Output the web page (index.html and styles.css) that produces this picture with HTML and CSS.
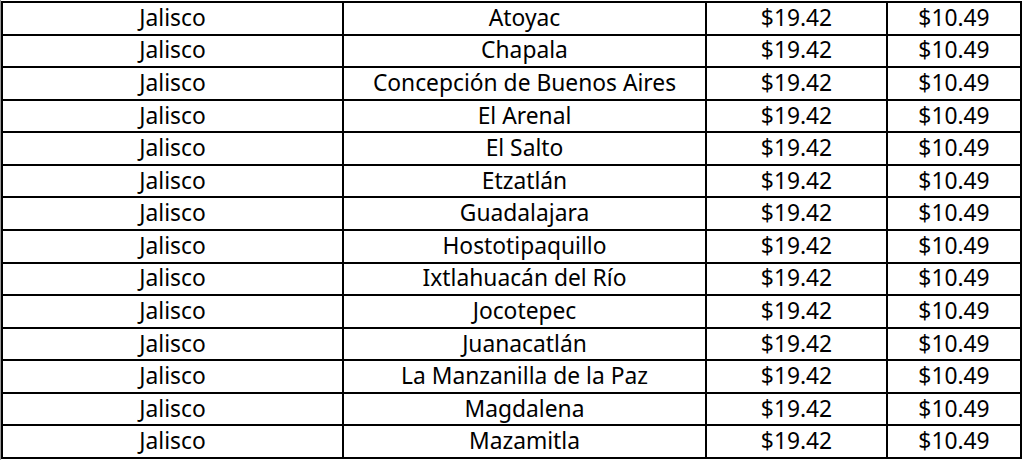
FILE: index.html
```html
<!DOCTYPE html>
<html lang="es">
<head>
<meta charset="utf-8">
<title>Tarifas Jalisco</title>
<link rel="stylesheet" href="styles.css">
</head>
<body>
<div class="page">
  <div class="grid" role="table">
    <div class="row" role="row"><div class="cell">Jalisco</div><div class="cell">Atoyac</div><div class="cell">$19.42</div><div class="cell">$10.49</div></div>
    <div class="row" role="row"><div class="cell">Jalisco</div><div class="cell">Chapala</div><div class="cell">$19.42</div><div class="cell">$10.49</div></div>
    <div class="row" role="row"><div class="cell">Jalisco</div><div class="cell">Concepción de Buenos Aires</div><div class="cell">$19.42</div><div class="cell">$10.49</div></div>
    <div class="row" role="row"><div class="cell">Jalisco</div><div class="cell">El Arenal</div><div class="cell">$19.42</div><div class="cell">$10.49</div></div>
    <div class="row" role="row"><div class="cell">Jalisco</div><div class="cell">El Salto</div><div class="cell">$19.42</div><div class="cell">$10.49</div></div>
    <div class="row" role="row"><div class="cell">Jalisco</div><div class="cell">Etzatlán</div><div class="cell">$19.42</div><div class="cell">$10.49</div></div>
    <div class="row" role="row"><div class="cell">Jalisco</div><div class="cell">Guadalajara</div><div class="cell">$19.42</div><div class="cell">$10.49</div></div>
    <div class="row" role="row"><div class="cell">Jalisco</div><div class="cell">Hostotipaquillo</div><div class="cell">$19.42</div><div class="cell">$10.49</div></div>
    <div class="row" role="row"><div class="cell">Jalisco</div><div class="cell">Ixtlahuacán del Río</div><div class="cell">$19.42</div><div class="cell">$10.49</div></div>
    <div class="row" role="row"><div class="cell">Jalisco</div><div class="cell">Jocotepec</div><div class="cell">$19.42</div><div class="cell">$10.49</div></div>
    <div class="row" role="row"><div class="cell">Jalisco</div><div class="cell">Juanacatlán</div><div class="cell">$19.42</div><div class="cell">$10.49</div></div>
    <div class="row" role="row"><div class="cell">Jalisco</div><div class="cell">La Manzanilla de la Paz</div><div class="cell">$19.42</div><div class="cell">$10.49</div></div>
    <div class="row" role="row"><div class="cell">Jalisco</div><div class="cell">Magdalena</div><div class="cell">$19.42</div><div class="cell">$10.49</div></div>
    <div class="row" role="row"><div class="cell">Jalisco</div><div class="cell">Mazamitla</div><div class="cell">$19.42</div><div class="cell">$10.49</div></div>
  </div>
</div>
</body>
</html>
```

FILE: styles.css
```css
html, body {
  margin: 0;
  padding: 0;
  background: #ffffff;
}

.page {
  padding: 1px 0 0 0;
  border-left: 1px solid #9a9a9a;
  width: 1024px;
  box-sizing: border-box;
  height: 460px;
  overflow: hidden;
}

.grid {
  display: grid;
  grid-template-columns: 341px 363px 181px 134px;
  grid-auto-rows: 32.57px;
  border-left: 2px solid #000;
  border-top: 2px solid #000;
  width: max-content;
  font-family: "Noto Sans", "Open Sans", sans-serif;
  font-size: 22.8px;
  color: #000;
}

.row {
  display: contents;
}

.cell {
  box-sizing: border-box;
  border-right: 2px solid #000;
  border-bottom: 2px solid #000;
  display: flex;
  align-items: center;
  justify-content: center;
  white-space: nowrap;
  line-height: 1;
}
```
